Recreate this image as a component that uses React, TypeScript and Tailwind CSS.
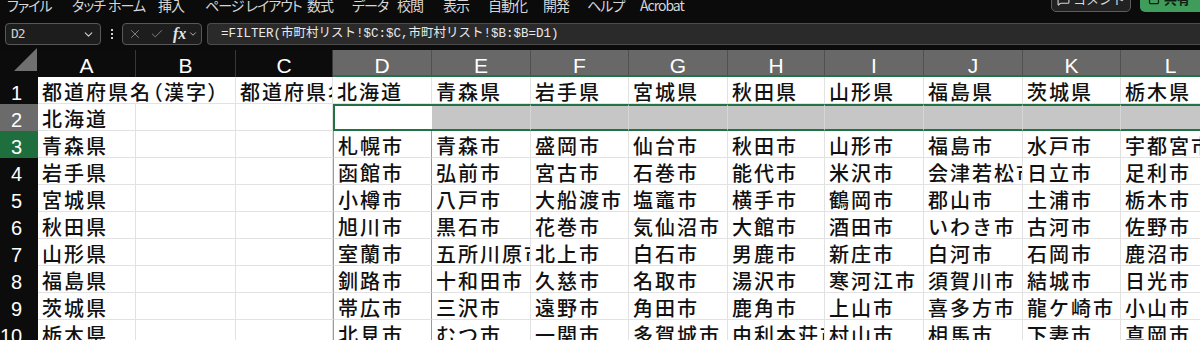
import { X, Check, ChevronDown, MessageSquare, SquareArrowOutUpRight } from 'lucide-react';

const menu: [string, string][] = [
  ['ファイル', 'w-[65px]'],
  ['タッチ', 'w-[36px]'],
  ['ホーム', 'w-[50px]'],
  ['挿入', 'w-[47px]'],
  ['ページ レイアウト', 'w-[102px]'],
  ['数式', 'w-[45px]'],
  ['データ', 'w-[45px]'],
  ['校閲', 'w-[46px]'],
  ['表示', 'w-[45px]'],
  ['自動化', 'w-[55px]'],
  ['開発', 'w-[44px]'],
  ['ヘルプ', 'w-[53px]'],
  ['Acrobat', 'w-[60px]'],
];

const letters = ['A', 'B', 'C', 'D', 'E', 'F', 'G', 'H', 'I', 'J', 'K', 'L'];

const prefs = ['北海道', '青森県', '岩手県', '宮城県', '秋田県', '山形県', '福島県', '茨城県', '栃木県'];

// columns D..L, rows 3..10
const cities = [
  ['札幌市', '青森市', '盛岡市', '仙台市', '秋田市', '山形市', '福島市', '水戸市', '宇都宮市'],
  ['函館市', '弘前市', '宮古市', '石巻市', '能代市', '米沢市', '会津若松市', '日立市', '足利市'],
  ['小樽市', '八戸市', '大船渡市', '塩竈市', '横手市', '鶴岡市', '郡山市', '土浦市', '栃木市'],
  ['旭川市', '黒石市', '花巻市', '気仙沼市', '大館市', '酒田市', 'いわき市', '古河市', '佐野市'],
  ['室蘭市', '五所川原市', '北上市', '白石市', '男鹿市', '新庄市', '白河市', '石岡市', '鹿沼市'],
  ['釧路市', '十和田市', '久慈市', '名取市', '湯沢市', '寒河江市', '須賀川市', '結城市', '日光市'],
  ['帯広市', '三沢市', '遠野市', '角田市', '鹿角市', '上山市', '喜多方市', '龍ケ崎市', '小山市'],
  ['北見市', 'むつ市', '一関市', '多賀城市', '由利本荘市', '村山市', '相馬市', '下妻市', '真岡市'],
];

const cellText = 'h-[27px] overflow-hidden whitespace-nowrap pl-[4px] pt-[4px] leading-[22px] text-[20px] tracking-[2px] font-medium text-[#111]';

function RowHead({ n, tone }: { n: number; tone?: 'gray' | 'green' }) {
  const bg = tone === 'gray' ? 'bg-[#6b6b6b]' : tone === 'green' ? 'bg-[#1f6e3d]' : 'bg-[#0c0c0c]';
  return (
    <div className={`h-[27px] ${bg} text-right pr-[16px] pt-[5px] leading-[22px] text-[20px] text-white font-['Liberation_Sans_Narrow','Liberation_Sans',sans-serif]`}>
      {n}
    </div>
  );
}

function Cell({ text, className = '' }: { text?: string; className?: string }) {
  return <div className={`${cellText} bg-white border-r border-b border-[#e2e2e2] ${className}`}>{text}</div>;
}

export default function App() {
  return (
    <div className="w-[1200px] h-[340px] overflow-hidden bg-[#0b0b0b] font-['Noto_Sans_CJK_JP',sans-serif]">
      {/* ribbon tabs (cut off at top) */}
      <div className="h-[23px] flex items-start justify-between">
        <div className="flex pl-[7px] -mt-[3px] whitespace-nowrap text-[14px] leading-[16px] tracking-[-1px] text-[#d6d6d6] [font-feature-settings:'palt']">
          {menu.map(([t, w]) => (
            <span key={t} className={`${w} shrink-0`}>{t}</span>
          ))}
        </div>
        <div className="flex items-start gap-[9px] -mt-[14px]">
          <div className="h-[26px] flex items-center gap-[3px] px-[5px] rounded-[5px] border border-[#5c5c5c] bg-[#222] text-[13px] text-[#d8d8d8]">
            <MessageSquare size={13} strokeWidth={2} />
            <span>コメント</span>
          </div>
          <div className="h-[26px] w-[60px] flex items-center gap-[4px] pl-[8px] rounded-l-[5px] bg-[#3f9c5b] text-[13px] text-[#0d1f12] font-bold">
            <SquareArrowOutUpRight size={12} strokeWidth={2.5} />
            <span>共有</span>
          </div>
        </div>
      </div>

      {/* formula bar */}
      <div className="h-[22px] flex pl-[5px]">
        <div className="w-[96px] flex items-center justify-between px-[5px] rounded-[4px] border border-[#585858] bg-[#1d1d1d]">
          <span className="text-[13px] text-[#cfcfcf] font-['DejaVu_Sans_Mono',monospace] tracking-[-1px]">D2</span>
          <ChevronDown size={13} className="text-[#d0d0d0]" />
        </div>
        <div className="w-[21px] flex flex-col items-center justify-center gap-[2px]">
          <span className="w-[2px] h-[2px] bg-[#cfcfcf]" />
          <span className="w-[2px] h-[2px] bg-[#cfcfcf]" />
          <span className="w-[2px] h-[2px] bg-[#cfcfcf]" />
        </div>
        <div className="w-[80px] flex items-center pl-[5px] rounded-[4px] border border-[#585858] bg-[#1d1d1d]">
          <X size={14} strokeWidth={1.5} className="text-[#8c8c8c]" />
          <Check size={14} strokeWidth={1.5} className="text-[#8c8c8c] ml-[8px]" />
          <span className="ml-[9px] text-[16px] leading-none italic font-bold text-[#e6e6e6] font-['Liberation_Serif',serif]">fx</span>
          <ChevronDown size={10} className="text-[#cfcfcf] ml-[2px]" />
        </div>
        <div className="flex-1 ml-[5px] flex items-center pl-[13px] rounded-l-[4px] border border-r-0 border-[#4c4c4c] bg-[#2a2a2a] text-[12.5px] text-[#eaeaea] font-['Liberation_Mono','Noto_Sans_CJK_JP',monospace]">
          =FILTER(市町村リスト!$C:$C,市町村リスト!$B:$B=D1)
        </div>
      </div>
      <div className="h-[5px]" />

      {/* sheet grid */}
      <div className="grid grid-cols-[38px_98px_100px_97px_99px_99px_98px_99px_97px_99px_99px_98px_100px]">
        {/* column headers */}
        <div className="h-[27px] bg-[#0c0c0c] flex items-end justify-end">
          <svg width="24" height="24" viewBox="0 0 24 24" className="mb-[5px]">
            <polygon points="23,0 23,23 0,23" fill="#707070" />
          </svg>
        </div>
        {letters.map((l, i) => (
          <div
            key={l}
            className={`h-[27px] overflow-hidden text-center pt-[3px] leading-[25px] text-[21px] text-white font-['Liberation_Sans',sans-serif] ${
              i < 3 ? 'bg-[#0c0c0c] border-r border-[#383838]' : 'bg-[#686868] border-r border-[#505050] border-b-2 border-b-[#217346]'
            }`}
          >
            {l}
          </div>
        ))}

        {/* row 1 */}
        <RowHead n={1} />
        <div className={`${cellText} col-span-2 bg-white border-r border-b border-[#e2e2e2] [font-feature-settings:'palt'] tracking-[2.5px]`}>
          都道府県名（漢字）
        </div>
        <Cell text="都道府県名（ローマ字）" />
        {prefs.map((p) => (
          <Cell key={p} text={p} />
        ))}

        {/* row 2 (selection D2:L2) */}
        <RowHead n={2} tone="gray" />
        <Cell text="北海道" />
        <Cell />
        <Cell />
        <div className={`${cellText} bg-white border-2 border-r-0 border-[#217346]`} />
        {prefs.slice(1).map((p) => (
          <div key={p} className={`${cellText} bg-[#c6c6c6] border-y-2 border-[#217346] border-r border-r-[#d6d6d6]`} />
        ))}

        {/* rows 3..10 */}
        {cities.map((row, r) => (
          <div key={r} className="contents">
            <RowHead n={r + 3} tone={r === 0 ? 'green' : undefined} />
            <Cell text={prefs[r + 1]} />
            <Cell />
            <Cell />
            {row.map((c, i) => (
              <Cell key={c} text={c} className={i === 0 ? 'border-l border-l-[#8b9cc4] border-r-[#8b9cc4]' : ''} />
            ))}
          </div>
        ))}
      </div>
    </div>
  );
}
